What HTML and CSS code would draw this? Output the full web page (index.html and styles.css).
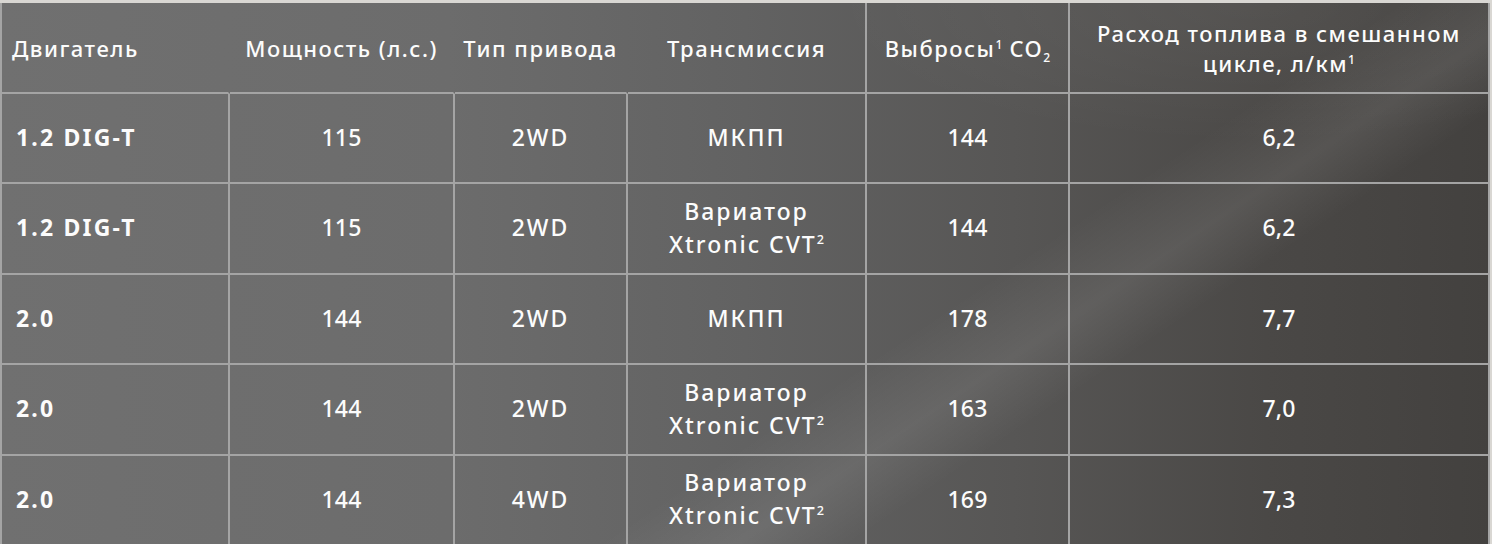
FILE: index.html
```html
<!DOCTYPE html>
<html lang="ru">
<head>
<meta charset="utf-8">
<title>Характеристики</title>
<link rel="stylesheet" href="styles.css">
</head>
<body>
<div class="page">
  <div class="spec">
    <div class="cell head first open"><span>Двигатель</span></div>
    <div class="cell head open"><span>Мощность (л.с.)</span></div>
    <div class="cell head open"><span>Тип привода</span></div>
    <div class="cell head"><span>Трансмиссия</span></div>
    <div class="cell head"><span>Выбросы<sup>1</sup> CO<sub>2</sub></span></div>
    <div class="cell head"><span>Расход топлива в смешанном<br>цикле, л/км<sup>1</sup></span></div>

    <div class="cell first eng"><span>1.2 DIG-T</span></div>
    <div class="cell num"><span>115</span></div>
    <div class="cell txt"><span>2WD</span></div>
    <div class="cell txt"><span>МКПП</span></div>
    <div class="cell num"><span>144</span></div>
    <div class="cell num"><span>6,2</span></div>

    <div class="cell first eng"><span>1.2 DIG-T</span></div>
    <div class="cell num"><span>115</span></div>
    <div class="cell txt"><span>2WD</span></div>
    <div class="cell txt"><span>Вариатор<br>Xtronic CVT<sup>2</sup></span></div>
    <div class="cell num"><span>144</span></div>
    <div class="cell num"><span>6,2</span></div>

    <div class="cell first eng"><span>2.0</span></div>
    <div class="cell num"><span>144</span></div>
    <div class="cell txt"><span>2WD</span></div>
    <div class="cell txt"><span>МКПП</span></div>
    <div class="cell num"><span>178</span></div>
    <div class="cell num"><span>7,7</span></div>

    <div class="cell first eng"><span>2.0</span></div>
    <div class="cell num"><span>144</span></div>
    <div class="cell txt"><span>2WD</span></div>
    <div class="cell txt"><span>Вариатор<br>Xtronic CVT<sup>2</sup></span></div>
    <div class="cell num"><span>163</span></div>
    <div class="cell num"><span>7,0</span></div>

    <div class="cell first eng"><span>2.0</span></div>
    <div class="cell num"><span>144</span></div>
    <div class="cell txt"><span>4WD</span></div>
    <div class="cell txt"><span>Вариатор<br>Xtronic CVT<sup>2</sup></span></div>
    <div class="cell num"><span>169</span></div>
    <div class="cell num"><span>7,3</span></div>
  </div>
</div>
</body>
</html>
```
FILE: styles.css
```css
html, body {
  margin: 0;
  padding: 0;
}
body {
  background: #d9d7d3;
  font-family: "Noto Sans", "Open Sans", sans-serif;
  color: #fcfcfc;
  overflow: hidden;
}
.page {
  padding-top: 3px;
  width: 1490px;
}
.spec {
  display: grid;
  grid-template-columns: 230px 225px 173px 239px 203px 420px;
  grid-template-rows: 91px 90px 91px 90px 91px 90px;
  background:
    linear-gradient(146deg, rgba(255,255,255,0) 61%, rgba(255,255,255,0.08) 67%, rgba(255,255,255,0.0) 72%),
    radial-gradient(ellipse 420px 140px at 1250px 0px, rgba(255,255,255,0.06), rgba(255,255,255,0)),
    linear-gradient(90deg, #707070 0%, #6c6c6c 30%, #626262 50%, #575655 68%, #4a4846 85%, #43413f 100%);
}
.cell {
  display: flex;
  align-items: center;
  justify-content: center;
  text-align: center;
  border-right: 2px solid #a4a4a4;
  border-bottom: 2px solid #a4a4a4;
  font-size: 23px;
  font-weight: 500;
  line-height: 33px;
  padding-bottom: 2px;
}
.cell.num {
  letter-spacing: 0.2px;
}
.cell.txt {
  letter-spacing: 2px;
}
.cell.first {
  border-left: 2px solid #a4a4a4;
  justify-content: flex-start;
  text-align: left;
  padding-left: 13px;
}
.cell.head {
  font-size: 22px;
  line-height: 30px;
  letter-spacing: 1.5px;
  padding-bottom: 0;
}
.cell.head.first {
  padding-left: 10px;
}
.cell.open {
  border-right-color: transparent;
}
.cell.eng {
  font-weight: 700;
  letter-spacing: 2.2px;
  padding-left: 14px;
}
sup, sub {
  font-size: 0.55em;
  line-height: 0;
  letter-spacing: 0;
}
sup {
  vertical-align: 0.7em;
}
sub {
  vertical-align: -0.4em;
}
```
